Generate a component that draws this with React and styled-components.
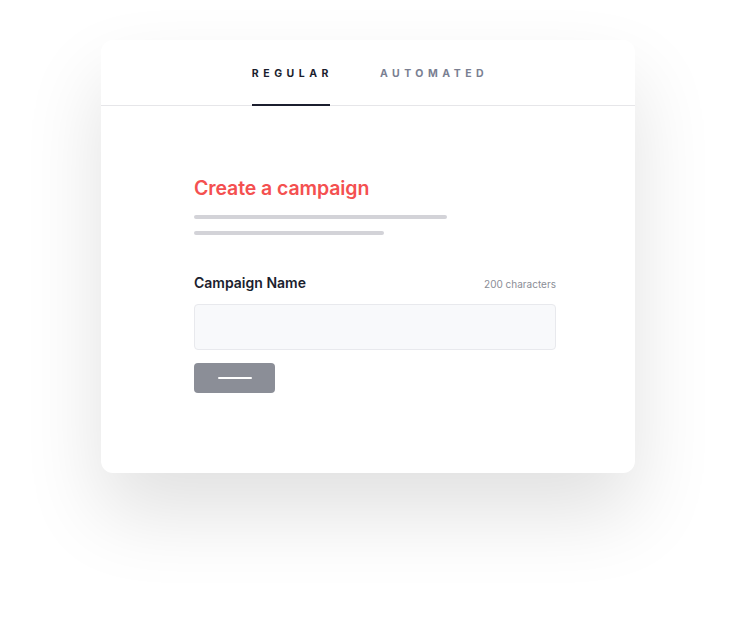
import React from "react";
import styled, { createGlobalStyle } from "styled-components";

const Global = createGlobalStyle`
  html, body { margin: 0; padding: 0; background: #ffffff; }
  body { font-family: Inter, "Noto Sans", sans-serif; }
`;

const Page = styled.div`
  width: 736px;
  height: 638px;
  padding-top: 40px;
  box-sizing: border-box;
  overflow: hidden;
`;

const Card = styled.div`
  width: 534px;
  height: 433px;
  margin: 0 auto;
  background: #fff;
  border-radius: 12px;
  box-shadow: 0 40px 80px rgba(0, 0, 0, 0.12);
  display: flex;
  flex-direction: column;
`;

const Tabs = styled.div`
  display: flex;
  justify-content: center;
  gap: 47px;
  height: 65px;
  border-bottom: 1px solid #e6e6e9;
  padding-left: 4px;
`;

const Tab = styled.div`
  display: flex;
  align-items: center;
  font-size: 10.5px;
  font-weight: 700;
  letter-spacing: 4.5px;
  color: ${(p) => (p.$active ? "#1b1e2e" : "#7a7f92")};
  position: relative;
  padding-top: 1px;
  &::after {
    content: "";
    display: ${(p) => (p.$active ? "block" : "none")};
    position: absolute;
    left: 0;
    right: 3px;
    bottom: -1px;
    height: 2px;
    background: #1b1e2e;
  }
`;

const Body = styled.div`
  padding: 70px 79px 0 93px;
  display: flex;
  flex-direction: column;
`;

const Title = styled.h1`
  margin: 0;
  font-size: 19.5px;
  font-weight: 600;
  color: #f45050;
  line-height: 24px;
  letter-spacing: -0.1px;
`;

const Bar = styled.div`
  height: 4px;
  border-radius: 2px;
  background: #d3d3d8;
  width: ${(p) => p.$w}px;
  margin-top: ${(p) => p.$mt}px;
`;

const LabelRow = styled.div`
  display: flex;
  justify-content: space-between;
  align-items: baseline;
  margin-top: 39px;
`;

const Label = styled.div`
  font-size: 14px;
  font-weight: 600;
  color: #1b1e2e;
  line-height: 18px;
`;

const Hint = styled.div`
  font-size: 10px;
  color: #8a8d96;
`;

const Input = styled.div`
  margin-top: 12px;
  height: 44px;
  background: #f8f9fb;
  border: 1px solid #e8e9ed;
  border-radius: 4px;
`;

const Button = styled.div`
  margin-top: 13px;
  width: 81px;
  height: 30px;
  border-radius: 4px;
  background: #8b8e97;
  display: flex;
  align-items: center;
  justify-content: center;
`;

const ButtonLine = styled.div`
  width: 34px;
  height: 2px;
  background: #fff;
  border-radius: 1px;
`;

export default function App() {
  return (
    <Page>
      <Global />
      <Card>
        <Tabs>
          <Tab $active>REGULAR</Tab>
          <Tab>AUTOMATED</Tab>
        </Tabs>
        <Body>
          <Title>Create a campaign</Title>
          <Bar $w={253} $mt={15} />
          <Bar $w={190} $mt={12} />
          <LabelRow>
            <Label>Campaign Name</Label>
            <Hint>200 characters</Hint>
          </LabelRow>
          <Input />
          <Button>
            <ButtonLine />
          </Button>
        </Body>
      </Card>
    </Page>
  );
}
